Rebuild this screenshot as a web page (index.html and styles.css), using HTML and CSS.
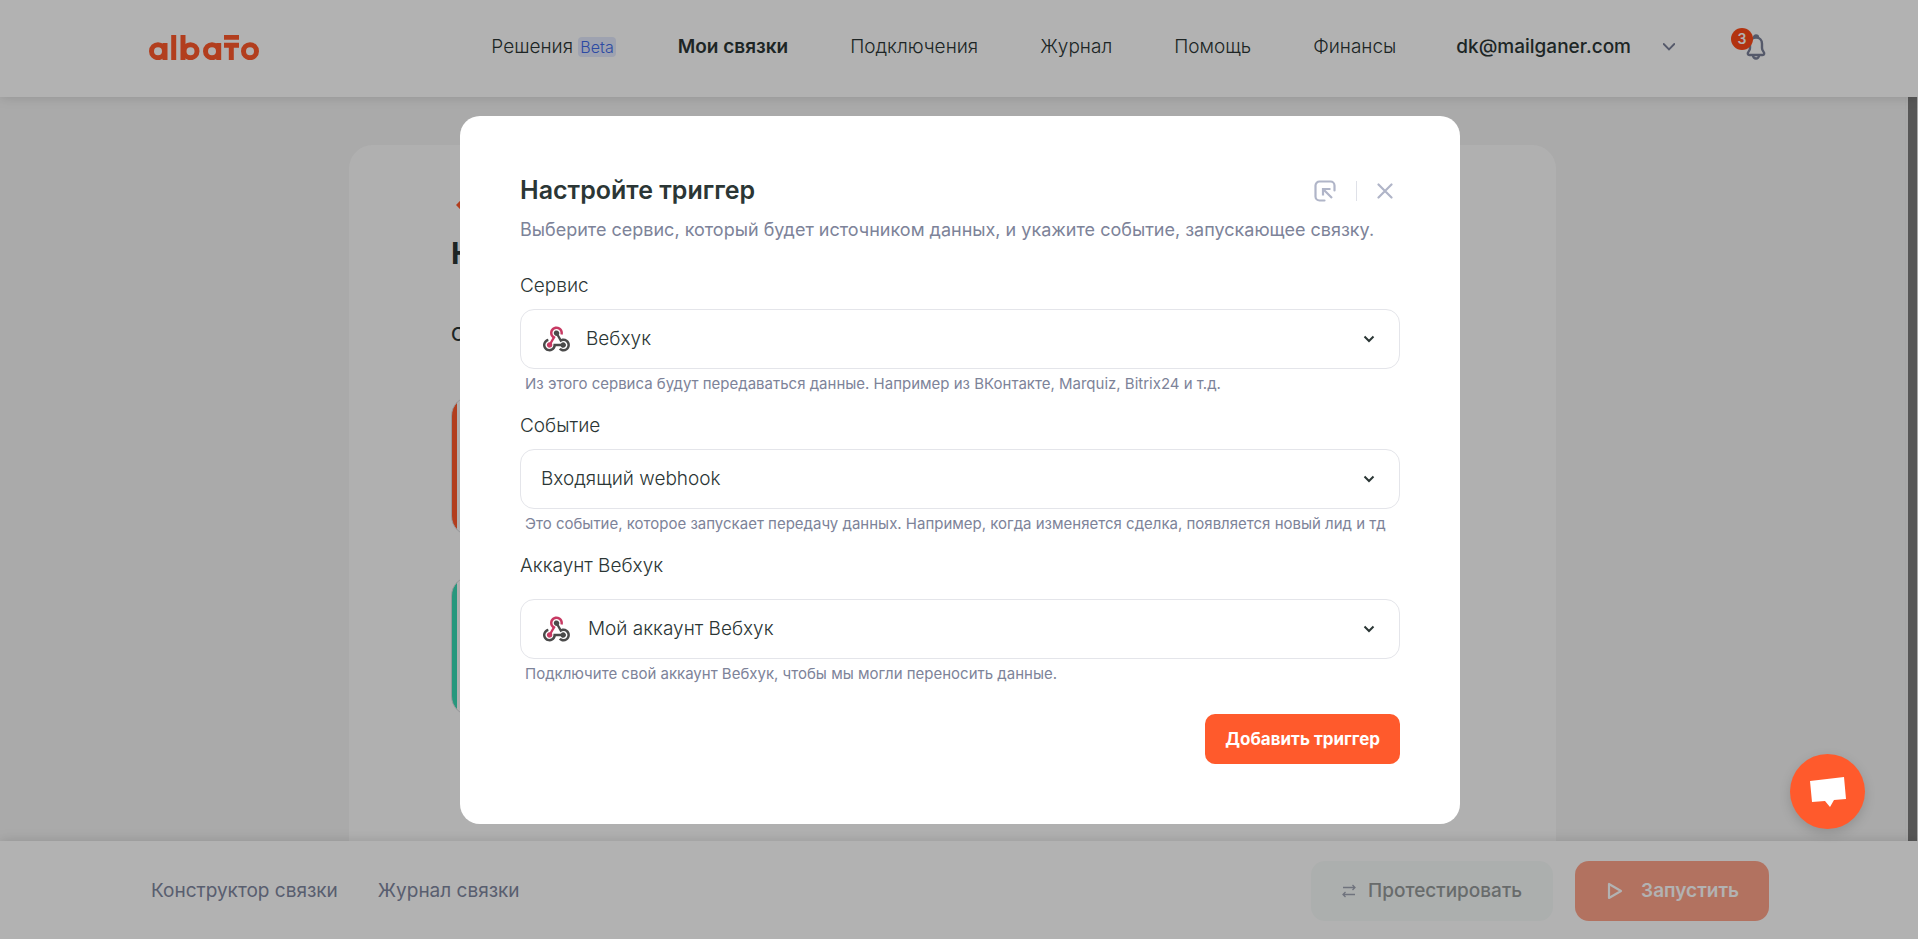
FILE: index.html
```
<!DOCTYPE html>
<html lang="ru">
<head>
<meta charset="utf-8">
<meta name="viewport" content="width=device-width, initial-scale=1">
<title>Albato</title>
<link rel="stylesheet" href="styles.css">
</head>
<body>
<svg class="sprite" aria-hidden="true">
  <symbol id="webhook" viewBox="0 0 256 239">
    <path fill="#c73a63" d="M119.54 100.503c-10.61 17.836-20.775 35.108-31.152 52.25-2.665 4.401-3.984 7.986-1.855 13.58 5.878 15.454-2.414 30.493-17.998 34.575-14.697 3.851-29.016-5.808-31.932-21.543-2.584-13.927 8.224-27.58 23.58-29.757 1.286-.184 2.6-.205 4.762-.367l23.358-39.168C73.612 95.465 64.868 78.39 66.803 57.23c1.368-14.957 7.25-27.883 18-38.477 20.59-20.288 52.002-23.573 76.246-8.001 23.284 14.958 33.948 44.094 24.858 69.031-6.854-1.858-13.756-3.732-21.343-5.79 2.854-13.865.743-26.315-8.608-36.981-6.178-7.042-14.106-10.733-23.12-12.093-18.072-2.73-35.815 8.88-41.08 26.618-5.976 20.13 3.069 36.575 27.784 48.967z"/>
    <path fill="#4b4b4b" d="M149.841 79.41c7.475 13.187 15.065 26.573 22.587 39.836 38.02-11.763 66.686 9.284 76.97 31.817 12.422 27.219 3.93 59.457-20.465 76.25-25.04 17.238-56.707 14.293-78.892-7.851 5.654-4.733 11.336-9.487 17.407-14.566 21.912 14.192 41.077 13.524 55.305-3.282 12.133-14.337 11.87-35.714-.615-49.75-14.408-16.197-33.707-16.691-57.035-1.143-9.677-17.168-19.522-34.199-28.893-51.491-3.16-5.828-6.648-9.21-13.77-10.443-11.893-2.062-19.571-12.275-20.032-23.717-.453-11.316 6.214-21.545 16.634-25.53 10.322-3.949 22.435-.762 29.378 8.014 5.674 7.17 7.477 15.24 4.491 24.083-.83 2.466-1.905 4.852-3.07 7.774z"/>
    <path fill="#4a4a4a" d="M167.707 187.21h-45.77c-4.387 18.044-13.863 32.612-30.19 41.876-12.693 7.2-26.373 9.641-40.933 7.29-26.808-4.323-48.728-28.456-50.658-55.63-2.184-30.784 18.975-58.147 47.178-64.293 1.947 7.071 3.915 14.21 5.862 21.264-25.876 13.202-34.832 29.836-27.59 50.636 6.375 18.304 24.484 28.337 44.147 24.457 20.08-3.962 30.204-20.65 28.968-47.432 19.036 0 38.088-.197 57.126.097 7.434.117 13.173-.654 18.773-7.208 9.22-10.784 26.191-9.811 36.121.374 10.148 10.409 9.662 27.157-1.077 37.127-10.361 9.62-26.73 9.106-36.424-1.26-1.992-2.136-3.562-4.673-5.533-7.298z"/>
  </symbol>
  <symbol id="chevron" viewBox="0 0 12 8">
    <path d="M1.500 1.500 6 6l4.500-4.500" fill="none" stroke="currentColor" stroke-width="2"/>
  </symbol>
</svg>

<div class="page">
  <header class="header">
    <div class="container header-row">
      <a class="logo" href="#" aria-label="albato">
        <svg width="111" height="25" viewBox="0 0 111 25" fill="none" stroke="#ff5a2c" stroke-width="5">
          <circle cx="9" cy="16.200" r="6.500"/><path d="M16 8v17"/>
          <path d="M24.700 0v25"/>
          <path d="M34 0v25"/><circle cx="41.500" cy="16.200" r="6.500"/>
          <circle cx="63" cy="16.200" r="6.500"/><path d="M69.700 8v17"/>
          <path d="M75 2.200h15M75 10.300h15M82.300 10v15"/>
          <circle cx="101" cy="16.200" r="6.500"/>
        </svg>
      </a>
      <nav class="nav">
        <a href="#">Решения <span class="beta">Beta</span></a>
        <a class="active" href="#">Мои связки</a>
        <a href="#">Подключения</a>
        <a href="#">Журнал</a>
        <a href="#">Помощь</a>
        <a href="#">Финансы</a>
      </nav>
      <button class="account" type="button">dk@mailganer.com
        <svg width="12" height="8" viewBox="0 0 12 8"><path d="M.7 1 6 6.400 11.300 1" fill="none" stroke="#7a8099" stroke-width="1.800" stroke-linecap="round"/></svg>
      </button>
      <button class="bell" type="button" aria-label="Уведомления">
        <svg width="22" height="26" viewBox="0 0 22 26" fill="none" stroke="#7a8099" stroke-width="2.400">
          <path d="M9 3.500a2 2 0 0 1 4 0M11 3.500c-3.600 0-6 2.700-6 6.200v4.300c0 1.600-.5 2.700-1.500 3.800-1.300 1.500-.8 3.200 1 3.200h13c1.800 0 2.300-1.700 1-3.200-1-1.100-1.500-2.200-1.500-3.800V9.700c0-3.500-2.400-6.200-6-6.200z"/>
          <path d="M8 21.500a3 3 0 0 0 6 0"/>
        </svg>
        <span class="badge">3</span>
      </button>
    </div>
  </header>

  <main class="main">
    <div class="content">
      <section class="card">
        <a class="back" href="#" aria-label="Назад"><svg width="16" height="10" viewBox="0 0 16 10"><path d="M15 5H2M6 1 2 5l4 4" fill="none" stroke="#ff5a2c" stroke-width="3"/></svg></a>
        <h1 class="card-title">Н</h1>
        <p class="card-sub">О</p>
        <div class="step step-trigger"></div>
        <div class="step step-action"></div>
      </section>
    </div>
    <div class="scrollbar"><div class="thumb"></div></div>
  </main>

  <footer class="footer">
    <div class="container footer-row">
      <nav class="footer-nav">
        <a href="#">Конструктор связки</a>
        <a href="#">Журнал связки</a>
      </nav>
      <div class="footer-actions">
        <button class="btn btn-test" type="button" disabled>
          <svg width="14" height="14" viewBox="0 0 14 14" fill="none" stroke="#a0a5b4" stroke-width="1.300"><path d="M1 3.500h12M10.500 1 13 3.500 10.500 6M13 10.500H1M3.500 8 1 10.500 3.500 13"/></svg>
          Протестировать
        </button>
        <button class="btn btn-run" type="button" disabled>
          <svg width="16" height="18" viewBox="0 0 16 18" fill="none" stroke="#fff" stroke-width="2.200" stroke-linejoin="round"><path d="M2 2v14l12-7z"/></svg>
          Запустить
        </button>
      </div>
    </div>
  </footer>
</div>

<div class="overlay">
  <form class="modal" role="dialog" aria-labelledby="modal-title">
    <div class="modal-head">
      <h2 class="modal-title" id="modal-title">Настройте триггер</h2>
      <div class="modal-tools">
        <button class="tool" type="button" aria-label="Свернуть">
          <svg width="22" height="22" viewBox="0 0 22 22" fill="none" stroke="#b0b5c8" stroke-width="2.200"><path d="M20.500 10.500V5.500a4 4 0 0 0-4-4h-11a4 4 0 0 0-4 4v11a4 4 0 0 0 4 4h5" stroke-linecap="round"/><path d="M9 15.500V9h7.500M9 9l9 9"/></svg>
        </button>
        <span class="divider"></span>
        <button class="tool" type="button" aria-label="Закрыть">
          <svg width="16" height="16" viewBox="0 0 16 16" fill="none" stroke="#b0b5c8" stroke-width="2.200" stroke-linecap="round"><path d="m1.500 1.500 13 13M14.500 1.500l-13 13"/></svg>
        </button>
      </div>
    </div>
    <p class="modal-text">Выберите сервис, который будет источником данных, и укажите событие, запускающее связку.</p>

    <div class="group">
      <label class="label" for="service">Сервис</label>
      <div class="field">
        <svg class="service-icon" width="27" height="26"><use href="#webhook"/></svg>
        <select id="service"><option>Вебхук</option></select>
        <svg class="chevron" width="12" height="8"><use href="#chevron"/></svg>
      </div>
      <p class="hint">Из этого сервиса будут передаваться данные. Например из ВКонтакте, Marquiz, Bitrix24 и т.д.</p>
    </div>
    <div class="group">
      <label class="label" for="event">Событие</label>
      <div class="field">
        <select id="event"><option>Входящий webhook</option></select>
        <svg class="chevron" width="12" height="8"><use href="#chevron"/></svg>
      </div>
      <p class="hint">Это событие, которое запускает передачу данных. Например, когда изменяется сделка, появляется новый лид и тд</p>
    </div>
    <div class="group group-account">
      <label class="label" for="account">Аккаунт Вебхук</label>
      <div class="field">
        <svg class="service-icon" width="27" height="26"><use href="#webhook"/></svg>
        <select id="account"><option>Мой аккаунт Вебхук</option></select>
        <svg class="chevron" width="12" height="8"><use href="#chevron"/></svg>
      </div>
      <p class="hint">Подключите свой аккаунт Вебхук, чтобы мы могли переносить данные.</p>
    </div>
    <div class="modal-actions">
      <button class="submit" type="submit">Добавить триггер</button>
    </div>
  </form>
</div>

<button class="chat" type="button" aria-label="Чат">
  <svg width="38" height="32" viewBox="0 0 38 32"><path fill="#fff" d="M1 5 35 1l2 22-12 1-4 7-5-6-13 1z"/></svg>
</button>
</body>
</html>
```
FILE: styles.css
```
* { box-sizing: border-box; }

body {
  margin: 0;
  font-family: Inter, "Liberation Sans", sans-serif;
  font-size: 19px;
  line-height: 24px;
  color: #2b3635;
}

h1, h2, p { margin: 0; }
a { color: inherit; text-decoration: none; }
button, select { font: inherit; color: inherit; background: none; border: 0; padding: 0; }
svg { display: block; flex: none; }
.sprite { position: absolute; width: 0; height: 0; }

.page {
  display: flex;
  flex-direction: column;
  height: 100vh;
  background: #f4f4f4;
}

.container { max-width: 1620px; margin: 0 auto; }

/* Header */
.header {
  position: relative;
  padding: 22px 0 27px;
  background: #fff;
  box-shadow: 0 0 12px rgba(0, 0, 0, .15);
}
.header-row { display: flex; align-items: center; min-height: 48px; padding: 2px 2px 0 0; }
.nav { display: flex; gap: 62px; margin-left: auto; font-weight: 300; }
.nav .active { font-weight: 600; }
.beta {
  display: inline-block;
  padding: 0 2px;
  border-radius: 4px;
  background: #e3e9fc;
  color: #3f6bea;
  font-size: 16px;
  line-height: 20px;
}
.account { display: flex; align-items: center; gap: 32px; margin-left: 60px; font-weight: 500; }
.bell { position: relative; margin-left: 70px; }
.badge {
  position: absolute;
  top: -6px;
  left: -14px;
  width: 22px;
  height: 22px;
  border-radius: 50%;
  background: #ff4a17;
  color: #fff;
  font-size: 14px;
  font-weight: 600;
  line-height: 22px;
  text-align: center;
}

/* Page body */
.main { display: flex; flex: 1; min-height: 0; overflow: hidden; }
.content { flex: 1; padding-top: 48px; }
.card {
  display: flex;
  flex-direction: column;
  max-width: 1207px;
  min-height: 100%;
  margin: 0 auto;
  padding: 48px 102px 0;
  border-radius: 24px 24px 0 0;
  background: #fdfdfd;
}
.back { padding: 7px 5px; }
.card-title { margin-top: 16px; font-size: 30px; line-height: 40px; font-weight: 700; }
.card-sub { margin-top: 50px; font-weight: 500; }
.step {
  height: 140px;
  margin-top: 40px;
  border: 1px solid #d8dadd;
  border-radius: 20px;
}
.step-trigger { margin-top: 49px; background: linear-gradient(to right, #ff5a2c 5px, transparent 5px); }
.step-action { background: linear-gradient(to right, #38d8b4 5px, transparent 5px); }
.scrollbar { display: flex; width: 13px; padding: 0 1px 0 2px; border-left: 1px solid #f0f1f1; }
.thumb { flex: 1; background: #7d7d7d; }

/* Footer */
.footer {
  position: relative;
  padding: 20px 0 18px;
  background: #fff;
  box-shadow: 0 0 12px rgba(0, 0, 0, .15);
}
.footer-row, .footer-nav, .footer-actions { display: flex; align-items: center; }
.footer-row { justify-content: space-between; }
.footer-nav { gap: 40px; padding-left: 2px; color: #7f87a0; }
.footer-actions { gap: 22px; }
.btn { display: flex; align-items: center; height: 60px; border-radius: 14px; }
.btn-test { gap: 12px; padding: 0 31px; background: #f7fbfa; color: #959a9a; font-weight: 500; }
.btn-run { gap: 18px; padding: 0 30px 0 32px; background: #ff5a2c; color: #fff; font-weight: 600; opacity: .55; }

/* Trigger dialog */
.overlay {
  position: fixed;
  inset: 0;
  display: flex;
  align-items: center;
  justify-content: center;
  padding-left: 2px;
  background: rgba(0, 0, 0, .3);
}
.modal { width: 1000px; padding: 60px; border-radius: 20px; background: #fff; }
.modal-head { display: flex; align-items: center; justify-content: space-between; }
.modal-title { font-size: 25px; line-height: 28px; font-weight: 600; }
.modal-tools { display: flex; align-items: center; gap: 20px; padding: 2px 7px 0 0; }
.divider { width: 1px; height: 20px; background: #dfe1e8; }
.modal-text { margin-top: 14px; font-size: 18px; color: #7d8399; }
.group { margin-top: 19px; }
.modal-text + .group { margin-top: 31px; }
.label { display: block; font-weight: 300; line-height: 26px; }
.field {
  display: flex;
  align-items: center;
  gap: 16px;
  height: 60px;
  margin-top: 10px;
  padding: 0 24px 0 22px;
  border: 1px solid #e4e5ea;
  border-radius: 14px;
}
.group-account .field { gap: 18px; margin-top: 20px; }
.field select { flex: 1; appearance: none; height: 58px; font-weight: 300; }
.field select:first-child { margin-left: -2px; }
.hint { padding: 5px 5px 0; font-size: 15px; line-height: 20px; color: #7d8399; }
.modal-actions { display: flex; justify-content: flex-end; margin-top: 30px; }
.submit {
  height: 50px;
  padding: 0 20px;
  border-radius: 10px;
  background: #ff5a2c;
  color: #fff;
  font-size: 17px;
  font-weight: 700;
}

/* Chat launcher */
.chat {
  position: fixed;
  right: 53px;
  bottom: 110px;
  display: flex;
  align-items: center;
  justify-content: center;
  width: 75px;
  height: 75px;
  border-radius: 50%;
  background: #ff5a2c;
  box-shadow: 0 4px 12px rgba(0, 0, 0, .15);
}
```
